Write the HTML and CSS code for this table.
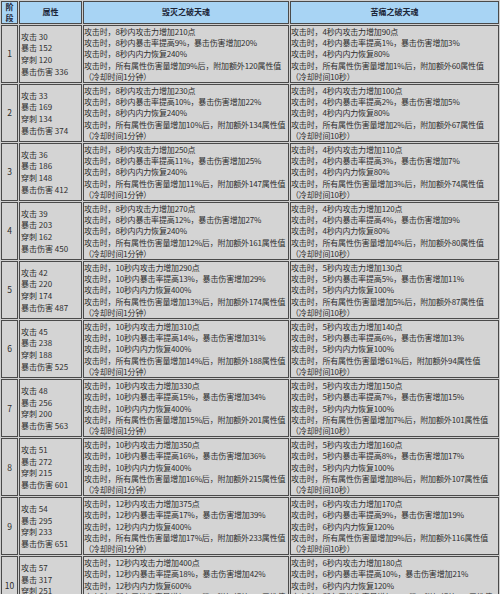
FILE: index.html
```html
<!DOCTYPE html>
<html lang="zh">
<head>
<meta charset="utf-8">
<title>破天魂属性</title>
<link rel="stylesheet" href="styles.css">
</head>
<body>
<table class="tbl">
<colgroup><col class="c0"><col class="c1"><col class="c2"><col class="c3"></colgroup>
<thead>
<tr class="head"><th>阶<br>段</th><th>属性</th><th>毁灭之破天魂</th><th>苦痛之破天魂</th></tr>
</thead>
<tbody>
<tr><td class="num">1</td><td class="attr">攻击 30<br>暴击 152<br>穿刺 120<br>暴击伤害 336</td>
<td class="eff">攻击时，8秒内攻击力增加210点<br>攻击时，8秒内暴击率提高9%，暴击伤害增加20%<br>攻击时，8秒内内力恢复240%<br>攻击时，所有属性伤害量增加9%后，附加额外120属性值<br>（冷却时间1分钟）</td>
<td class="eff">攻击时，4秒内攻击力增加90点<br>攻击时，4秒内暴击率提高1%，暴击伤害增加3%<br>攻击时，4秒内内力恢复80%<br>攻击时，所有属性伤害量增加1%后，附加额外60属性值<br>（冷却时间10秒）</td></tr>
<tr><td class="num">2</td><td class="attr">攻击 33<br>暴击 169<br>穿刺 134<br>暴击伤害 374</td>
<td class="eff">攻击时，8秒内攻击力增加230点<br>攻击时，8秒内暴击率提高10%，暴击伤害增加22%<br>攻击时，8秒内内力恢复240%<br>攻击时，所有属性伤害量增加10%后，附加额外134属性值<br>（冷却时间1分钟）</td>
<td class="eff">攻击时，4秒内攻击力增加100点<br>攻击时，4秒内暴击率提高2%，暴击伤害增加5%<br>攻击时，4秒内内力恢复80%<br>攻击时，所有属性伤害量增加2%后，附加额外67属性值<br>（冷却时间10秒）</td></tr>
<tr><td class="num">3</td><td class="attr">攻击 36<br>暴击 186<br>穿刺 148<br>暴击伤害 412</td>
<td class="eff">攻击时，8秒内攻击力增加250点<br>攻击时，8秒内暴击率提高11%，暴击伤害增加25%<br>攻击时，8秒内内力恢复240%<br>攻击时，所有属性伤害量增加11%后，附加额外147属性值<br>（冷却时间1分钟）</td>
<td class="eff">攻击时，4秒内攻击力增加110点<br>攻击时，4秒内暴击率提高3%，暴击伤害增加7%<br>攻击时，4秒内内力恢复80%<br>攻击时，所有属性伤害量增加3%后，附加额外74属性值<br>（冷却时间10秒）</td></tr>
<tr><td class="num">4</td><td class="attr">攻击 39<br>暴击 203<br>穿刺 162<br>暴击伤害 450</td>
<td class="eff">攻击时，8秒内攻击力增加270点<br>攻击时，8秒内暴击率提高12%，暴击伤害增加27%<br>攻击时，8秒内内力恢复240%<br>攻击时，所有属性伤害量增加12%后，附加额外161属性值<br>（冷却时间1分钟）</td>
<td class="eff">攻击时，4秒内攻击力增加120点<br>攻击时，4秒内暴击率提高4%，暴击伤害增加9%<br>攻击时，4秒内内力恢复80%<br>攻击时，所有属性伤害量增加4%后，附加额外80属性值<br>（冷却时间10秒）</td></tr>
<tr><td class="num">5</td><td class="attr">攻击 42<br>暴击 220<br>穿刺 174<br>暴击伤害 487</td>
<td class="eff">攻击时，10秒内攻击力增加290点<br>攻击时，10秒内暴击率提高13%，暴击伤害增加29%<br>攻击时，10秒内内力恢复400%<br>攻击时，所有属性伤害量增加13%后，附加额外174属性值<br>（冷却时间1分钟）</td>
<td class="eff">攻击时，5秒内攻击力增加130点<br>攻击时，5秒内暴击率提高5%，暴击伤害增加11%<br>攻击时，5秒内内力恢复100%<br>攻击时，所有属性伤害量增加5%后，附加额外87属性值<br>（冷却时间10秒）</td></tr>
<tr><td class="num">6</td><td class="attr">攻击 45<br>暴击 238<br>穿刺 188<br>暴击伤害 525</td>
<td class="eff">攻击时，10秒内攻击力增加310点<br>攻击时，10秒内暴击率提高14%，暴击伤害增加31%<br>攻击时，10秒内内力恢复400%<br>攻击时，所有属性伤害量增加14%后，附加额外188属性值<br>（冷却时间1分钟）</td>
<td class="eff">攻击时，5秒内攻击力增加140点<br>攻击时，5秒内暴击率提高6%，暴击伤害增加13%<br>攻击时，5秒内内力恢复100%<br>攻击时，所有属性伤害量增61%后，附加额外94属性值<br>（冷却时间10秒）</td></tr>
<tr><td class="num">7</td><td class="attr">攻击 48<br>暴击 256<br>穿刺 200<br>暴击伤害 563</td>
<td class="eff">攻击时，10秒内攻击力增加330点<br>攻击时，10秒内暴击率提高15%，暴击伤害增加34%<br>攻击时，10秒内内力恢复400%<br>攻击时，所有属性伤害量增加15%后，附加额外201属性值<br>（冷却时间1分钟）</td>
<td class="eff">攻击时，5秒内攻击力增加150点<br>攻击时，5秒内暴击率提高7%，暴击伤害增加15%<br>攻击时，5秒内内力恢复100%<br>攻击时，所有属性伤害量增加7%后，附加额外101属性值<br>（冷却时间10秒）</td></tr>
<tr><td class="num">8</td><td class="attr">攻击 51<br>暴击 272<br>穿刺 215<br>暴击伤害 601</td>
<td class="eff">攻击时，10秒内攻击力增加350点<br>攻击时，10秒内暴击率提高16%，暴击伤害增加36%<br>攻击时，10秒内内力恢复400%<br>攻击时，所有属性伤害量增加16%后，附加额外215属性值<br>（冷却时间1分钟）</td>
<td class="eff">攻击时，5秒内攻击力增加160点<br>攻击时，5秒内暴击率提高8%，暴击伤害增加17%<br>攻击时，5秒内内力恢复100%<br>攻击时，所有属性伤害量增加8%后，附加额外107属性值<br>（冷却时间10秒）</td></tr>
<tr><td class="num">9</td><td class="attr">攻击 54<br>暴击 295<br>穿刺 233<br>暴击伤害 651</td>
<td class="eff">攻击时，12秒内攻击力增加375点<br>攻击时，12秒内暴击率提高17%，暴击伤害增加39%<br>攻击时，12秒内内力恢复400%<br>攻击时，所有属性伤害量增加17%后，附加额外233属性值<br>（冷却时间1分钟）</td>
<td class="eff">攻击时，6秒内攻击力增加170点<br>攻击时，6秒内暴击率提高9%，暴击伤害增加19%<br>攻击时，6秒内内力恢复120%<br>攻击时，所有属性伤害量增加9%后，附加额外116属性值<br>（冷却时间10秒）</td></tr>
<tr><td class="num">10</td><td class="attr">攻击 57<br>暴击 317<br>穿刺 251<br>暴击伤害 689</td>
<td class="eff">攻击时，12秒内攻击力增加400点<br>攻击时，12秒内暴击率提高18%，暴击伤害增加42%<br>攻击时，12秒内内力恢复600%<br>攻击时，所有属性伤害量增加18%后，附加额外251属性值<br>（冷却时间1分钟）</td>
<td class="eff">攻击时，6秒内攻击力增加180点<br>攻击时，6秒内暴击率提高10%，暴击伤害增加21%<br>攻击时，6秒内内力恢复120%<br>攻击时，所有属性伤害量增加10%后，附加额外125属性值<br>（冷却时间10秒）</td></tr>
</tbody>
</table>
</body>
</html>
```
FILE: styles.css
```css
html, body {
  margin: 0;
  padding: 0;
  background: #d3d3d3;
}
body {
  font-family: "Noto Sans CJK SC", "Noto Sans", sans-serif;
  font-size: 8px;
  color: #2e2e2e;
}
.tbl {
  width: 500px;
  table-layout: fixed;
  border-collapse: separate;
  border-spacing: 1px;
  background: #cfcfcf;
}
.c0 { width: 17px; }
.c1 { width: 63px; }
.c2 { width: 206px; }
.c3 { width: 209px; }
.tbl th,
.tbl td {
  border: 1px solid #4a4a4a;
  padding: 0 0 0 1px;
  white-space: nowrap;
  overflow: hidden;
}
.head th {
  background: #a8d4f4;
  color: #1c2638;
  font-weight: bold;
  font-size: 8px;
  line-height: 10.5px;
  height: 21px;
  text-align: center;
  vertical-align: middle;
  padding: 0;
}
.tbl td {
  background: #d4d4d4;
  line-height: 11.2px;
  height: 56px;
  vertical-align: middle;
}
.tbl td.num {
  text-align: center;
  padding: 0;
  font-size: 8.5px;
}
.tbl td.attr {
  line-height: 11.6px;
  padding-left: 1px;
}
.tbl td.eff {
  padding-left: 0;
  letter-spacing: -0.15px;
}
```
